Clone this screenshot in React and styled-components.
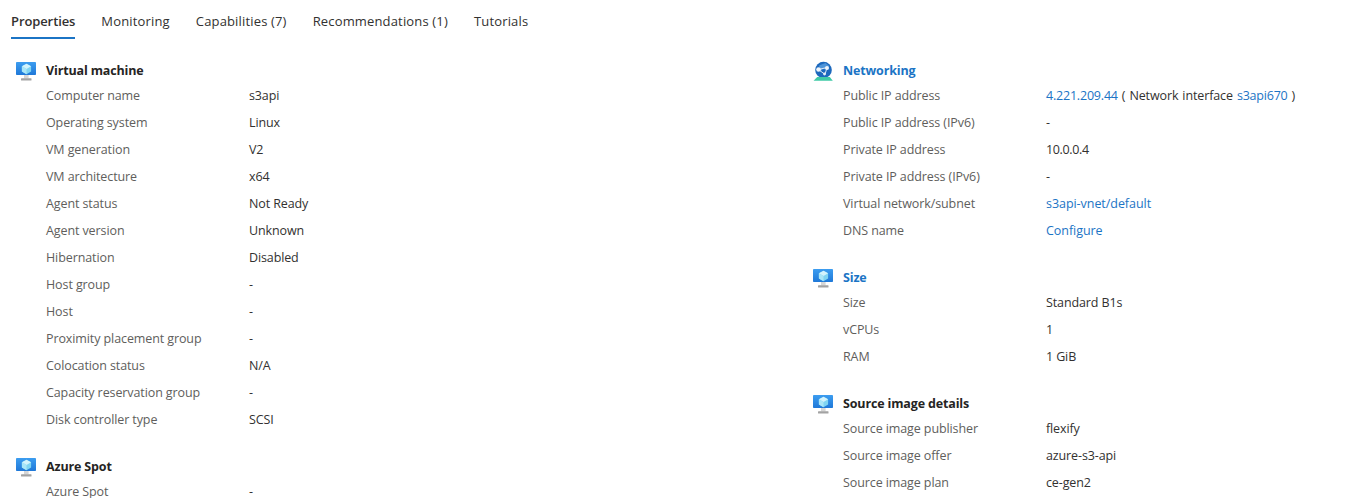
import React from "react";
import styled, { createGlobalStyle } from "styled-components";

const Global = createGlobalStyle`
  html, body { margin: 0; padding: 0; background: #fff; height: 498px; overflow: hidden; }
  body { font-family: "Open Sans", "Noto Sans", "Liberation Sans", sans-serif; font-size: 12.5px; color: #292827; }
`;
const Page = styled.div`height: 498px; overflow: hidden;`;
const Tabs = styled.nav`display: flex; gap: 26px; padding: 0 0 0 11px; height: 39px; margin-bottom: 20px;`;
const Tab = styled.div`
  height: 39px; box-sizing: border-box; padding-top: 12px; line-height: 19px; font-size: 13px; color: #323130;
  font-weight: ${p => (p.$active ? 600 : 400)};
  letter-spacing: ${p => (p.$active ? "-.1px" : ".16px")};
  border-bottom: 2px solid ${p => (p.$active ? "#1b74c5" : "transparent")};
`;
const Columns = styled.div`display: grid; grid-template-columns: 797px 1fr; padding-left: 16px;`;
const Column = styled.div`display: flex; flex-direction: column; gap: 22px;`;
const Section = styled.section`display: flex; flex-direction: column;`;
const Header = styled.div`display: flex; align-items: center; height: 23px; gap: 10px;`;
const Title = styled.h3`
  margin: 0; font-size: 12.5px; font-weight: 700; line-height: 20px; letter-spacing: -.15px;
  color: ${p => (p.$link ? "#1b74c5" : "#252423")};
`;
const Row = styled.div`display: grid; grid-template-columns: 203px 1fr; height: 27px; line-height: 27px; padding-left: 30px; white-space: nowrap;`;
const Label = styled.span`color: #605e5c; letter-spacing: -.1px;`;
const Value = styled.span`color: #323130; letter-spacing: -.12px;`;
const Link = styled.span`color: #1b74c5; letter-spacing: -.05px;`;
const IpLink = styled(Link)`letter-spacing: -.2px;`;
const NicText = styled.span`word-spacing: .9px;`;
const Digits = styled.span`letter-spacing: -.35px;`;
const IconBox = styled.svg`flex: none; display: block;`;

const Monitor = () => (
  <IconBox width="20" height="20" viewBox="0 0 20 20">
    <defs>
      <linearGradient id="mon" x1="0" y1="0" x2="0" y2="1">
        <stop offset="0" stopColor="#3c9df0" /><stop offset="1" stopColor="#1f78d8" />
      </linearGradient>
    </defs>
    <rect x="0" y="1" width="20" height="13" rx=".8" fill="url(#mon)" />
    <path d="M10.5 2.8l4.6 2.5v5.2l-4.6 2.7-4.6-2.7V5.3z" fill="#7fd4f2" />
    <path d="M10.5 2.8l4.6 2.5-4.6 2.6-4.6-2.6z" fill="#d2f3fc" />
    <path d="M5.9 5.3l4.6 2.6v5.3l-4.6-2.7z" fill="#a9e6f8" />
    <path d="M8 14h4.6v3.4H8z" fill="#d6d6d6" />
    <rect x="5" y="17.2" width="10.5" height="2.2" rx=".5" fill="#a3a3a3" />
  </IconBox>
);
const Globe = () => (
  <IconBox width="20" height="20" viewBox="0 0 20 20">
    <circle cx="10.5" cy="9" r="8.3" fill="#1c68bd" />
    <path d="M6 4.5l6.5-2.4 3.8 3-2.4 3.4-4-.4-2.6 2.6z" fill="#4e94d8" />
    <path d="M5.5 8.5L14 6.5M5.5 8.5l6.5 5M14 6.5l-2 7" stroke="#dfeaf6" strokeWidth="1" fill="none" />
    <circle cx="5.5" cy="8.5" r="2.3" fill="#f0f5fb" />
    <circle cx="14" cy="7" r="2" fill="#f0f5fb" />
    <circle cx="11.5" cy="13" r="1.4" fill="#e4eef8" />
    <path d="M4.2 16h12.6l3 3.8H0.6z" fill="#3fcaa6" />
  </IconBox>
);

const S = ({ icon, title, link, rows }) => (
  <Section>
    <Header>
      {icon === "globe" ? <Globe /> : <Monitor />}
      <Title $link={link}>{title}</Title>
    </Header>
    {rows.map(([l, v]) => (
      <Row key={l}><Label>{l}</Label><Value>{v}</Value></Row>
    ))}
  </Section>
);

export default function App() {
  return (
    <Page>
      <Global />
      <Tabs>
        <Tab $active>Properties</Tab>
        <Tab>Monitoring</Tab>
        <Tab>Capabilities (7)</Tab>
        <Tab>Recommendations (1)</Tab>
        <Tab>Tutorials</Tab>
      </Tabs>
      <Columns>
        <Column>
          <S title="Virtual machine" rows={[
            ["Computer name", "s3api"],
            ["Operating system", "Linux"],
            ["VM generation", "V2"],
            ["VM architecture", "x64"],
            ["Agent status", "Not Ready"],
            ["Agent version", "Unknown"],
            ["Hibernation", "Disabled"],
            ["Host group", "-"],
            ["Host", "-"],
            ["Proximity placement group", "-"],
            ["Colocation status", "N/A"],
            ["Capacity reservation group", "-"],
            ["Disk controller type", "SCSI"],
          ]} />
          <S title="Azure Spot" rows={[["Azure Spot", "-"]]} />
        </Column>
        <Column>
          <S icon="globe" link title="Networking" rows={[
            ["Public IP address", <NicText><IpLink>4.221.209.44</IpLink> ( Network interface <IpLink>s3api670</IpLink> )</NicText>],
            ["Public IP address (IPv6)", "-"],
            ["Private IP address", <Digits>10.0.0.4</Digits>],
            ["Private IP address (IPv6)", "-"],
            ["Virtual network/subnet", <Link>s3api-vnet/default</Link>],
            ["DNS name", <Link>Configure</Link>],
          ]} />
          <S link title="Size" rows={[
            ["Size", "Standard B1s"],
            ["vCPUs", "1"],
            ["RAM", "1 GiB"],
          ]} />
          <S title="Source image details" rows={[
            ["Source image publisher", "flexify"],
            ["Source image offer", "azure-s3-api"],
            ["Source image plan", "ce-gen2"],
          ]} />
        </Column>
      </Columns>
    </Page>
  );
}
